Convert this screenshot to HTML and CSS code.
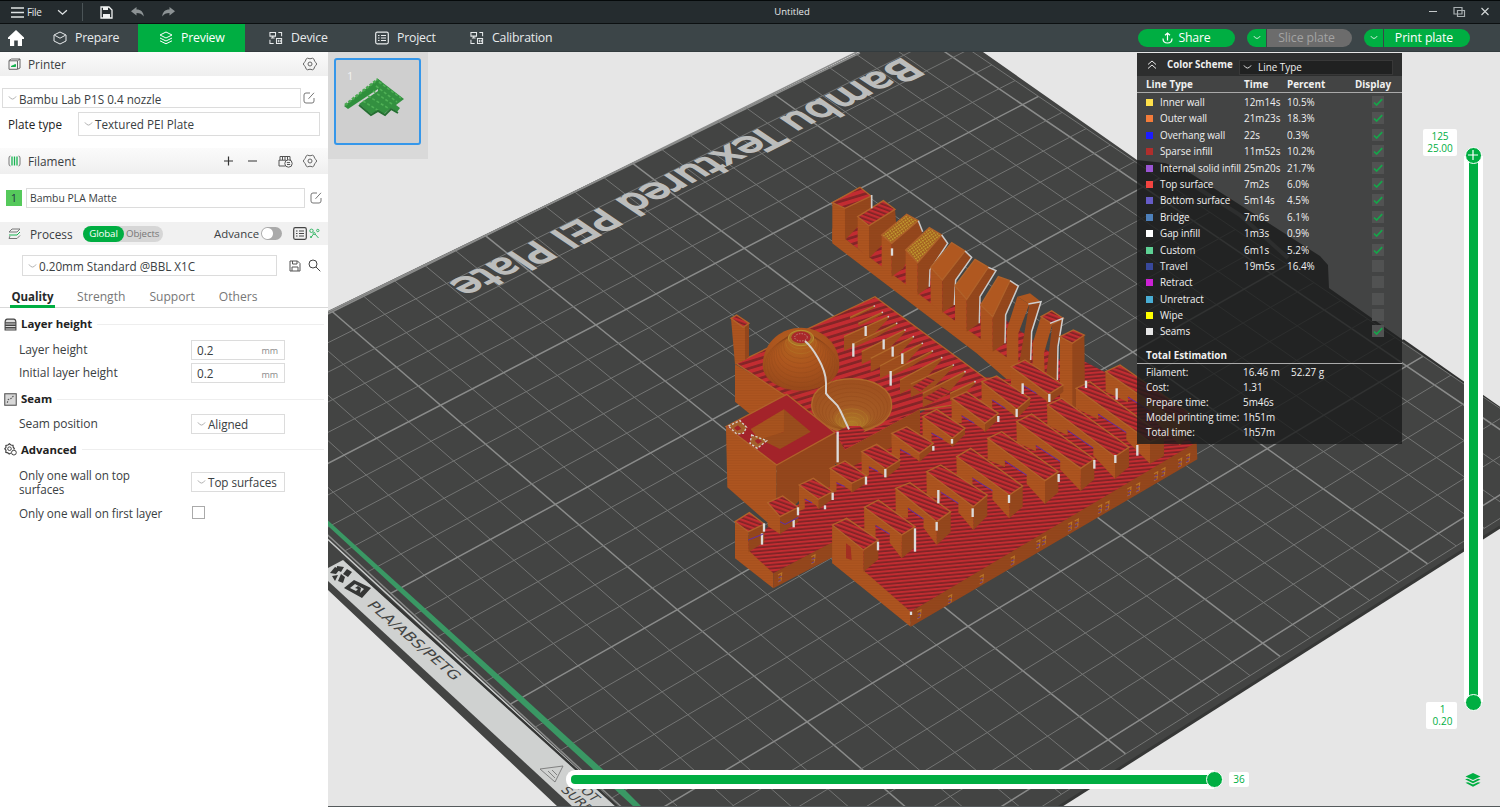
FILE: index.html
```html
<!DOCTYPE html>
<html lang="en">
<head>
<meta charset="utf-8">
<title>Untitled</title>
<link rel="stylesheet" href="styles.css">
</head>
<body>
<svg class="defs" width="0" height="0">
  <symbol id="i-chev" viewBox="0 0 10 6"><path d="M1 1.2 Q3 4.2 5 4.2 Q7 4.2 9 1.2" fill="none" stroke="currentColor"/></symbol>
  <symbol id="i-gear" viewBox="0 0 14 14"><path d="M4.500 1.200 Q7 2.400 9.500 1.200 L11 2.200 Q11.200 4.800 13.400 6 V8 Q11.200 9.200 11 11.800 L9.500 12.800 Q7 11.600 4.500 12.800 L3 11.800 Q2.800 9.200 .6 8 V6 Q2.800 4.800 3 2.200 Z" fill="none" stroke="currentColor" stroke-linejoin="round"/><circle cx="7" cy="7" r="2" fill="none" stroke="currentColor"/></symbol>
  <symbol id="i-edit" viewBox="0 0 12 12"><path d="M7 1 H3 Q1 1 1 3 V9 Q1 11 3 11 H9 Q11 11 11 9 V6 M5.5 6.8 L11 .8" fill="none" stroke="currentColor"/></symbol>
  <symbol id="i-device" viewBox="0 0 15 14"><path d="M1 1 H7 V5 H1 Z M4 5 V7 M2 7 H6 M10 1 H13.5 V5 M1 9 V13 H5 M8 7.500 H13.500 V13 H8 Z M10 9 V11.500 M12 9 V11.500" fill="none" stroke="currentColor" stroke-width="1.1"/></symbol>
  <symbol id="i-list" viewBox="0 0 14 13"><rect x=".7" y=".7" width="12.600" height="11.600" rx="1.500" fill="none" stroke="currentColor" stroke-width="1.200"/><path d="M3 4 H4.500 M6 4 H11 M3 6.500 H4.500 M6 6.500 H11 M3 9 H4.500 M6 9 H11" stroke="currentColor"/></symbol>
  <symbol id="i-save" viewBox="0 0 12 12"><path d="M1 1 H8.500 L11 3.500 V11 H1 Z M3.500 1 V4 H8 V1 M3 11 V7 H9 V11" fill="none" stroke="currentColor"/></symbol>
  <symbol id="i-check" viewBox="0 0 12 12"><path d="M2 6.500 L4.600 9 L10.200 3.200" fill="none" stroke="#15a64a" stroke-width="1.700"/></symbol>
</svg>

<header class="titlebar">
  <svg class="burger" viewBox="0 0 13 11"><path d="M0 1H13M0 5.500H13M0 10H13" stroke="#dfe3e4" stroke-width="1.300"/></svg>
  <span class="file">File</span>
  <svg class="file-chev" viewBox="0 0 10 6"><path d="M1 1 L5 4.500 L9 1" fill="none" stroke="#e0e4e5" stroke-width="1.200"/></svg>
  <i class="sep"></i>
  <svg class="tb-save" viewBox="0 0 13 13"><path d="M1 1 H9 L12 4 V12 H1 Z" fill="none" stroke="#f1f3f3" stroke-width="1.300"/><path d="M3 1H8V4H3Z M3 8H10V12H3Z" fill="#f1f3f3"/></svg>
  <svg class="tb-undo" viewBox="0 0 13 10"><path d="M0 4.200 L5.500 0 V2.400 C10 2.400 12.500 5 12.800 9.500 C11 7 9 6 5.500 6 V8.500 Z" fill="#8c9294"/></svg>
  <svg class="tb-redo" viewBox="0 0 13 10"><path d="M13 4.200 L7.500 0 V2.400 C3 2.400 .5 5 .2 9.500 C2 7 4 6 7.500 6 V8.500 Z" fill="#8c9294"/></svg>
  <span class="title">Untitled</span>
  <svg class="winbtns" viewBox="0 0 62 12"><path d="M0 5.500H8" stroke="#c4c9ca"/><path d="M25 1.500 H33 V8 H25 Z M28.500 4.500 H35.500 V10.500 H28.500 Z" fill="none" stroke="#aab0b2" stroke-width="1.200"/><path d="M52.500 2 L59.500 9 M59.500 2 L52.500 9" stroke="#d5d9da" stroke-width="1.100"/></svg>
</header>

<nav class="tabs">
  <svg class="home" viewBox="0 0 16 16"><path d="M8 0 L16 7.500 V9 H14 V16 H9.800 V10.500 H6.200 V16 H2 V9 H0 V7.500 Z" fill="#fff"/></svg>
  <a class="tab prepare"><svg viewBox="0 0 14 14"><path d="M7 1 L13 4 V10 L7 13 L1 10 V4 Z M1.500 4.200 L7 7.200 L12.500 4.200" fill="none" stroke="currentColor"/></svg><span>Prepare</span></a>
  <a class="tab preview"><svg viewBox="0 0 14 14"><path d="M7 1 L13 4 L7 7 L1 4 Z M1 7 L7 10 L13 7 M1 9.800 L7 12.800 L13 9.800" fill="none" stroke="currentColor"/></svg><span>Preview</span></a>
  <a class="tab device"><svg><use href="#i-device"/></svg><span>Device</span></a>
  <a class="tab project"><svg><use href="#i-list"/></svg><span>Project</span></a>
  <a class="tab calib"><svg><use href="#i-device"/></svg><span>Calibration</span></a>
  <div class="actions">
    <button class="pill share"><svg viewBox="0 0 11 12"><path d="M5.500 8.500 V1 M3 3.200 L5.500 1 L8 3.200 M1 6.500 Q1 11 5.500 11 Q10 11 10 6.500" fill="none" stroke="#fff" stroke-width="1.200"/></svg>Share</button>
    <div class="split slice"><b><svg><use href="#i-chev"/></svg></b><span>Slice plate</span></div>
    <div class="split print"><b><svg><use href="#i-chev"/></svg></b><span>Print plate</span></div>
  </div>
</nav>

<main class="work">
  <aside class="side">
    <div class="head h-printer">
      <svg class="hi" viewBox="0 0 13 12"><path d="M1 2.500 L3.500 1 H12 V10 L9.500 11.300 H1 Z M9.500 2.800 V11 M1 2.800 H9.500 L12 1" fill="none" stroke="#666"/><path d="M3 8.500 H7.500 V6.500 Z" fill="#13b04d" stroke="#13b04d"/></svg>
      <span>Printer</span><svg class="gear"><use href="#i-gear"/></svg>
    </div>
    <div class="row r-printer"><div class="combo"><svg class="cv"><use href="#i-chev"/></svg><span>Bambu Lab P1S 0.4 nozzle</span></div><svg class="edit"><use href="#i-edit"/></svg></div>
    <div class="row r-plate"><label>Plate type</label><div class="combo"><svg class="cv"><use href="#i-chev"/></svg><span>Textured PEI Plate</span></div></div>
    <div class="head h-fil">
      <svg class="hi" viewBox="0 0 13 12"><path d="M2.500 1 Q1 1 1 3 V9 Q1 11 2.500 11 M10.500 1 Q12 1 12 3 V9 Q12 11 10.500 11" fill="none" stroke="#777"/><path d="M4 1.500 V10.500 M6.500 1.500 V10.500 M9 1.500 V10.500" stroke="#18b352" stroke-width="1.300"/></svg>
      <span class="fil-name">Filament</span>
      <svg class="pm" viewBox="0 0 36 12"><path d="M1 6H10M5.500 1.500V10.500M25 6H34" stroke="#333" stroke-width="1.200"/></svg>
      <svg class="ams" viewBox="0 0 15 13"><path d="M2 5 V1.500 H12 V5 M4.500 1.500V5 M7 1.500V5 M9.500 1.500V5 M1 5.200 H8 M1 5 V11 H7 M12 5 H13" fill="none" stroke="#555"/><circle cx="10.500" cy="8.500" r="3.700" fill="#f7f7f7" stroke="#555"/><path d="M8.800 7.600H12 M12.200 9.500H9" stroke="#555"/></svg>
      <svg class="gear"><use href="#i-gear"/></svg>
    </div>
    <div class="row r-fil"><em>1</em><div class="combo"><span>Bambu PLA Matte</span></div><svg class="edit"><use href="#i-edit"/></svg></div>
    <div class="head h-proc">
      <svg class="hi" viewBox="0 0 13 12"><path d="M4 1 H12 L9 4 H1 Z" fill="none" stroke="#777"/><path d="M12 4 L9 7 H1" fill="none" stroke="#18b352"/><path d="M2 8 L1 10.500 H9 L12 7.500" fill="none" stroke="#777"/></svg>
      <span class="proc-name">Process</span>
      <div class="seg"><b>Global</b><i>Objects</i></div>
      <label>Advance</label><i class="toggle"></i>
      <svg class="plist"><use href="#i-list"/></svg>
      <svg class="cmp" viewBox="0 0 11 11"><path d="M4.500 6 L2 9.500 M6 6 L9.500 10" stroke="#36b767"/><circle cx="2.500" cy="2.800" r="1.700" fill="none" stroke="#36b767"/><circle cx="8.800" cy="2.500" r="1.200" fill="none" stroke="#36b767"/><circle cx="5.200" cy="5.500" r="1" fill="none" stroke="#36b767"/><circle cx="2" cy="9" r="1" fill="#36b767"/></svg>
    </div>
    <div class="row r-preset"><div class="combo"><svg class="cv"><use href="#i-chev"/></svg><span>0.20mm Standard @BBL X1C</span></div><svg class="psave"><use href="#i-save"/></svg><svg class="psearch" viewBox="0 0 13 13"><circle cx="5" cy="5" r="4" fill="none" stroke="#444"/><path d="M8 8 L12.300 12.300" stroke="#444"/></svg></div>
    <div class="ptabs"><a class="on">Quality</a><a>Strength</a><a>Support</a><a>Others</a></div>
    <div class="sec s1"><svg viewBox="0 0 12 12"><path d="M1 4 Q1 1 3 1 H9 Q11 1 11 4 V11 H1 Z" fill="#ddd" stroke="#444"/><path d="M1 4.500H11M1 6.700H11M1 9H11" stroke="#444" stroke-width="1.300"/></svg><b>Layer height</b><i></i></div>
    <div class="opt"><label>Layer height</label><div class="num"><span>0.2</span><small>mm</small></div></div>
    <div class="opt"><label>Initial layer height</label><div class="num"><span>0.2</span><small>mm</small></div></div>
    <div class="sec s2"><svg viewBox="0 0 12 12"><rect x=".7" y=".7" width="10.600" height="10.600" fill="#d8d8d8" stroke="#555"/><path d="M3 9 L4 6 L6.500 5 L9 2.500" fill="none" stroke="#555" stroke-dasharray="1.500 1"/></svg><b>Seam</b><i></i></div>
    <div class="opt o-seam"><label>Seam position</label><div class="num"><svg class="cv"><use href="#i-chev"/></svg><span>Aligned</span></div></div>
    <div class="sec s3"><svg viewBox="0 0 13 13"><path d="M6.800 10 L5.200 11 L3.800 9.800 L1.800 9.300 L2 7.300 L.8 5.800 L2 4.300 L1.900 2.500 L3.900 2 L5.400 .8 L7 2 L9 2.300 L9.200 4.200 L10.300 5.600 L9.800 6.500" fill="none" stroke="#444" stroke-width="1.200"/><circle cx="5.500" cy="5.700" r="1.800" fill="none" stroke="#444"/><circle cx="9.900" cy="9.600" r="2.400" fill="#fff" stroke="#444"/></svg><b>Advanced</b><i></i></div>
    <div class="opt o-top"><label>Only one wall on top<br>surfaces</label><div class="num"><svg class="cv"><use href="#i-chev"/></svg><span>Top surfaces</span></div></div>
    <div class="opt o-first"><label>Only one wall on first layer</label><i class="box"></i></div>
  </aside>

  <section class="view">
    <svg id="scene" viewBox="328 52 1172 755"></svg>
    <div class="thumbs"><div class="thumb"><span>1</span>
      <svg viewBox="0 0 87 87"><path d="M10 48 L44 21 L48 24 L47 29 L14 51 Z" fill="#2f8f3c"/><path d="M44 21 L70 41 L62 47 L66 50 L63 54 L57 50 L50 56 L44 53 L37 56 L25 46 L44 33 Z" fill="#339040"/><path d="M11 47 L44 21" stroke="#4aa951" stroke-width="2.500" stroke-dasharray="3 1.500"/><path d="M45 24 L67 40 M42 28 L63 44 M39 33 L58 46 M34 38 L54 50 M29 43 L45 53" stroke="#4fb055" stroke-width="1.600" stroke-dasharray="3 2"/><path d="M25 47 L37 57 L44 53 L51 57 L57 51 L64 55" fill="none" stroke="#256f32" stroke-width="2"/></svg>
    </div></div>

    <div class="legend">
      <div class="lg-title"><svg viewBox="0 0 10 9"><path d="M1 4.500 L5 1 L9 4.500 M1 8.500 L5 5 L9 8.500" fill="none" stroke="#e8e8e8"/></svg><b>Color Scheme</b><div class="lg-combo"><svg><use href="#i-chev"/></svg><span>Line Type</span></div></div>
      <div class="lg-row lg-head"><span>Line Type</span><span>Time</span><span>Percent</span><span>Display</span></div>
      <div id="rows"></div>
      <div class="lg-total">Total Estimation</div>
      <div class="lg-sum"><span>Filament:</span><span>16.46 m</span><span>52.27 g</span></div>
      <div class="lg-sum"><span>Cost:</span><span>1.31</span></div>
      <div class="lg-sum"><span>Prepare time:</span><span>5m46s</span></div>
      <div class="lg-sum"><span>Model printing time:</span><span>1h51m</span></div>
      <div class="lg-sum"><span>Total time:</span><span>1h57m</span></div>
    </div>

    <div class="vslider"><i class="knob top"><svg viewBox="0 0 14 14"><path d="M7 2V12M2 7H12" stroke="#fff" stroke-width="1.200"/></svg></i><i class="knob bottom"></i></div>
    <div class="tip t-top">125<br>25.00</div>
    <div class="tip t-bot">1<br>0.20</div>
    <div class="hslider"><i class="knob"></i></div>
    <div class="tip t-h">36</div>
    <svg class="layers" viewBox="0 0 16 14"><path d="M8 0 L15.500 3.500 L8 7 L.5 3.500 Z M.5 6 L3 5.800 L8 8.200 L13 5.800 L15.500 6.500 L8 10.300 L.5 6.500 Z M.5 9.800 L3 9.200 L8 11.600 L13 9.200 L15.500 9.800 L8 13.700 Z" fill="#00ae42"/></svg>
  </section>
</main>
<script src="scene.js"></script>
</body>
</html>
```

FILE: styles.css
```css
* { box-sizing: border-box; }
body { margin: 0; width: 1500px; height: 807px; overflow: hidden; display: flex; flex-direction: column; background: #e6e6e6; font: 12px/16px "Open Sans", "Noto Sans", sans-serif; color: #3a4042; }
svg { display: block; flex: none; }
.defs { position: absolute; }
i, em { font-style: normal; flex: none; }
span, label, b, a { white-space: nowrap; }

.titlebar { position: relative; flex: none; height: 24px; display: flex; align-items: center; background: #252c2f; border-top: 1px solid #05090a; border-bottom: 1px solid #0c1011; color: #e6e9ea; padding-left: 11px; }
.burger { width: 13px; height: 11px; }
.file { width: 31px; padding-left: 3px; font-size: 10px; letter-spacing: -.3px; }
.file-chev { width: 11px; height: 7px; margin-left: 2px; }
.sep { width: 1px; height: 18px; margin-left: 14px; background: #4b5457; }
.tb-save { width: 13px; height: 13px; margin-left: 17px; }
.tb-undo { width: 13px; height: 10px; margin-left: 18px; }
.tb-redo { width: 13px; height: 10px; margin-left: 18px; }
.title { position: absolute; left: 0; right: 16px; text-align: center; padding-left: 100px; font-size: 9.500px; }
.winbtns { width: 62px; height: 12px; margin-left: auto; margin-right: 9px; }

.tabs { flex: none; height: 28px; display: flex; align-items: center; background: #3c4548; color: #e8ebec; border-bottom: 1px solid #333b3e; }
.home { width: 16px; height: 16px; margin-left: 8px; }
.tab { display: flex; align-items: center; height: 28px; gap: 8px; font-size: 12.300px; letter-spacing: -.2px; }
.tab svg { width: 14px; height: 14px; }
.prepare { width: 114px; padding-left: 29px; }
.preview { width: 107px; padding-left: 21px; background: #00ae42; color: #fff; }
.device { width: 130px; padding-left: 24px; }
.project { width: 95px; }
.actions { margin-left: auto; margin-right: 30px; display: flex; align-items: center; gap: 12px; }
.pill { width: 97px; height: 18px; border: 0; border-radius: 9px; background: #00ae42; color: #fff; font: 12.300px/18px "Open Sans", sans-serif; letter-spacing: -.2px; display: flex; align-items: center; justify-content: center; gap: 5px; padding: 0; }
.pill svg { width: 11px; height: 12px; }
.split { display: flex; gap: 1px; color: #fff; font-size: 12.300px; letter-spacing: -.1px; line-height: 18px; text-align: center; }
.split b { width: 19px; height: 18px; border-radius: 9px 0 0 9px; background: #00ae42; display: flex; align-items: center; justify-content: center; }
.split b svg { width: 8px; height: 5px; }
.split span { width: 86px; height: 18px; border-radius: 0 9px 9px 0; background: #00ae42; padding-right: 6px; }
.slice span { width: 85px; background: #6c6c6c; color: #a3a3a3; }

.work { flex: 1; display: flex; min-height: 0; }
.side { width: 328px; flex: none; background: #fff; }
.head { display: flex; align-items: center; padding-left: 8px; padding-right: 11px; font-size: 11.800px; background: linear-gradient(#fbfbfb, #efefef); }
.head .hi { width: 13px; height: 12px; margin-right: 7px; }
.gear { width: 14px; height: 14px; color: #666; margin-left: auto; }
.h-printer { height: 24px; }
.h-fil { height: 26px; margin-top: 12px; }
.h-proc { height: 23px; margin-top: 14px; margin-bottom: 10px; background: #f1f1f1; }
.h-proc .hi { margin-right: 9px; }
.fil-name { width: 48px; }
.proc-name { width: 42px; }
.pm { width: 36px; height: 12px; margin-left: 147px; }
.ams { width: 15px; height: 13px; margin-left: 19px; }
.row { display: flex; align-items: center; }
.combo { display: flex; align-items: center; height: 100%; border: 1px solid #dcdcdc; background: #fff; padding-left: 5px; font-size: 11.700px; }
.cv { width: 9px; height: 6px; color: #a9a9a9; margin-right: 2px; }
.edit { width: 12px; height: 12px; color: #777; }
.r-printer { height: 20px; margin: 12px 0 0 2px; gap: 2px; }
.r-printer .combo { width: 299px; }
.r-printer span { padding-top: 1px; }
.r-plate { height: 24px; margin: 4px 0 0 8px; color: #222; font-size: 11.700px; }
.r-plate label { width: 70px; }
.r-plate .combo { width: 242px; color: #3a4042; }
.r-fil { height: 20px; margin: 14px 0 0 6px; }
.r-fil em { width: 16px; height: 16px; margin-right: 4px; background: #55c95b; text-align: center; color: #234; font-size: 11px; }
.r-fil .combo { width: 279px; padding-left: 3px; margin-right: 5px; font-size: 10.400px; }
.seg { flex: none; display: flex; width: 80px; height: 16px; margin-left: 11px; border-radius: 8px; background: #d6d6d6; font-size: 9.700px; letter-spacing: -.1px; line-height: 16px; }
.seg b { width: 41px; border-radius: 8px; background: #00ae42; color: #fff; font-weight: 400; text-align: center; }
.seg i { padding-left: 2px; color: #777; }
.h-proc label { width: 46px; margin-left: 51px; font-size: 11.400px; }
.toggle { width: 21px; height: 13px; margin-left: 2px; border-radius: 7px; background: radial-gradient(circle at 6.500px 6.500px, #fff 5px, #aaa 6px); }
.plist { width: 14px; height: 13px; margin-left: 11px; color: #444; }
.cmp { width: 11px; height: 11px; margin-left: 2px; }
.r-preset { height: 21px; margin: 0 0 0 22px; }
.r-preset .combo { width: 255px; }
.psave { width: 12px; height: 12px; margin-left: 12px; color: #555; }
.psearch { width: 13px; height: 13px; margin-left: 7px; }
.ptabs { height: 32px; display: flex; padding: 13px 0 0 10px; border-bottom: 1px solid #d9d9d9; color: #777; font-size: 12.100px; }
.ptabs a { margin-right: 24px; height: 19px; }
.ptabs .on { width: 45px; margin-right: 22px; text-align: center; font-size: 11.500px; font-weight: 700; color: #26292a; border-bottom: 3px solid #00ae42; }
.sec { display: flex; align-items: center; height: 16px; padding-left: 4px; color: #222; font-size: 11.400px; }
.sec svg { width: 13px; height: 13px; margin-right: 4px; }
.sec i { flex: 1; height: 1px; margin: 0 4px 0 5px; background: #eee; }
.s1 { margin: 8px 0 6px; }
.s2 { margin: 6px 0 6px; }
.s3 { margin: 6px 0 5px; }
.opt { display: flex; align-items: center; height: 23.500px; padding-left: 19px; font-size: 12px; letter-spacing: -.05px; }
.opt label { width: 172px; line-height: 14px; }
.num { width: 94px; height: 20px; border: 1px solid #dcdcdc; display: flex; align-items: center; padding-left: 5px; font-size: 11.700px; }
.num small { margin-left: auto; padding: 3px 6px 0 0; font-size: 9px; color: #8a8a8a; }
.o-seam { margin-top: -1px; }
.o-top { height: 38px; }
.o-first { height: 24px; }
.o-first label, .o-top label { font-size: 11.700px; }
.box { width: 13px; height: 13px; margin-left: 1px; border: 1px solid #aaa; }

.view { position: relative; flex: 1; overflow: hidden; background: #e6e6e6; border-bottom: 1px solid #555a5c; }
#scene { width: 1172px; height: 755px; }
.thumbs { position: absolute; left: 0; top: 0; width: 100px; height: 107px; background: #d9d9d9; padding: 6px; }
.thumb { position: relative; width: 87px; height: 87px; border: 2px solid #3597ea; border-radius: 3px; background: #cfcfcf; }
.thumb span { position: absolute; left: 11px; top: 8px; font-size: 11px; color: #f2f2f2; }
.thumb svg { width: 87px; height: 87px; margin: -2px; }

.legend { position: absolute; left: 809px; top: 1px; width: 265px; height: 391px; background: rgba(26, 27, 27, .8); color: #f0f0f0; font-size: 9.900px; }
.lg-title { height: 23px; display: flex; align-items: center; padding-left: 10px; background: rgba(20, 20, 20, .45); }
.lg-title svg { width: 10px; height: 9px; }
.lg-title b { margin-left: 10px; width: 72px; font-size: 9.700px; }
.lg-combo { display: flex; align-items: center; width: 154px; height: 15px; margin-top: 5px; background: #202121; border: 1px solid #383838; padding-left: 3px; }
.lg-combo svg { width: 9px; height: 6px; margin-right: 6px; }
.lg-row { display: grid; grid-template-columns: 98px 43px 68px 1fr; height: 16.400px; line-height: 16.400px; padding-left: 9px; }
.lg-row .chk { width: 12px; height: 12px; margin: 2px 0 0 17px; background: #515252; }
.lg-row .name::before { content: ""; display: inline-block; width: 7px; height: 7px; margin-right: 7px; background: var(--c); }
.lg-row .name { letter-spacing: -.05px; }
.lg-head { height: 17px; margin-bottom: 1px; font-weight: 700; border-bottom: 1px solid #aaa; }
.lg-total { height: 21px; padding: 5px 0 0 9px; margin-top: 3px; line-height: 14px; font-weight: 700; border-bottom: 1px solid #aaa; }
.lg-sum { display: grid; grid-template-columns: 97px 48px 1fr; height: 15px; line-height: 17px; padding-left: 9px; }

.vslider { position: absolute; left: 1136px; top: 104px; width: 19px; height: 546px; border: solid #fff; border-width: 0 5px 0 5px; background: #00ae42; }
.knob { position: absolute; width: 17px; height: 17px; border: 1.500px solid #fff; border-radius: 50%; background: #00ae42; }
.knob svg { width: 14px; height: 14px; }
.vslider .knob { left: -4px; }
.vslider .top { top: -9px; }
.vslider .bottom { bottom: -9px; }
.hslider { position: absolute; left: 238px; top: 718px; width: 648px; height: 19px; border: 5px solid #fff; border-radius: 9px 0 0 9px; border-right: 0; background: #00ae42; }
.hslider .knob { right: -9px; top: -4px; }
.tip { position: absolute; background: #fff; color: #00ae42; font-size: 10px; line-height: 12px; text-align: center; border-radius: 2px; }
.t-top { left: 1095px; top: 77px; width: 34px; height: 27px; padding: 1px 0 0 0; }
.t-bot { left: 1098px; top: 650px; width: 31px; height: 27px; padding: 1px 0 0 2px; }
.t-h { left: 901px; top: 720px; width: 20px; height: 15px; line-height: 15px; }
.layers { position: absolute; left: 1137px; top: 721px; width: 16px; height: 14px; }
```

FILE: scene.js
```js
// Legend rows
const LINES = [
  ['Inner wall', '12m14s', '10.5%', '#ffe14b', 1], ['Outer wall', '21m23s', '18.3%', '#f47c3a', 1],
  ['Overhang wall', '22s', '0.3%', '#1c1cff', 1], ['Sparse infill', '11m52s', '10.2%', '#b12e2c', 1],
  ['Internal solid infill', '25m20s', '21.7%', '#9a54d3', 1], ['Top surface', '7m2s', '6.0%', '#f24440', 1],
  ['Bottom surface', '5m14s', '4.5%', '#665cc7', 1], ['Bridge', '7m6s', '6.1%', '#4d80ba', 1],
  ['Gap infill', '1m3s', '0.9%', '#ffffff', 1], ['Custom', '6m1s', '5.2%', '#5ed194', 1],
  ['Travel', '19m5s', '16.4%', '#38489b', 0], ['Retract', '', '', '#cd22d6', 0],
  ['Unretract', '', '', '#49add4', 0], ['Wipe', '', '', '#ffff00', 0], ['Seams', '', '', '#e6e6e6', 1]
];
document.getElementById('rows').innerHTML = LINES.map(([n, t, p, c, on]) =>
  `<div class="lg-row"><span class="name" style="--c:${c}">${n}</span><span>${t}</span><span>${p}</span><svg class="chk">${on ? '<use href="#i-check"/>' : ''}</svg></div>`).join('');

// Bed plane -> screen: least-squares projective fit over grid marks [u, v, x, y]
const MARKS = [[5,0,745,248],[10,0,885,174.5],[10,5,1005.7,261],[10,10,1135,354],[-5,5,555.7,504],[0,5,713.5,420],
  [-5,10,675.2,610],[0,15,968.3,627],[5,15,1121.7,535],[10,15,1266,447.5],[5,20,1262.7,642.7],[-10,5,391,593]];
function fit(marks) {
  const M = Array.from({ length: 8 }, () => new Array(9).fill(0));
  const add = (r, t) => { for (let i = 0; i < 8; i++) { for (let j = 0; j < 8; j++) M[i][j] += r[i] * r[j]; M[i][8] += r[i] * t; } };
  for (const [u, v, X, Y] of marks) {
    const x = X / 100, y = Y / 100;
    add([u, v, 1, 0, 0, 0, -u * x, -v * x], x);
    add([0, 0, 0, u, v, 1, -u * y, -v * y], y);
  }
  for (let i = 0; i < 8; i++) {
    let p = i;
    for (let r = i + 1; r < 8; r++) if (Math.abs(M[r][i]) > Math.abs(M[p][i])) p = r;
    [M[i], M[p]] = [M[p], M[i]];
    for (let r = 0; r < 8; r++) if (r !== i) {
      const f = M[r][i] / M[i][i];
      for (let c = i; c < 9; c++) M[r][c] -= f * M[i][c];
    }
  }
  return M.map((r, i) => r[8] / r[i]);
}
const H = fit(MARKS);
const proj = (u, v) => {
  const w = H[6] * u + H[7] * v + 1;
  return [100 * (H[0] * u + H[1] * v + H[2]) / w, 100 * (H[3] * u + H[4] * v + H[5]) / w];
};
const out = [];
const put = s => out.push(s);
const P = pts => pts.map(p => p.map(n => n.toFixed(1)).join(',')).join(' ');
const poly = (pts, fill, extra = '') => put(`<polygon points="${P(pts)}" fill="${fill}" ${extra}/>`);
const line = (pts, stroke, w) => put(`<polyline points="${P(pts)}" fill="none" stroke="${stroke}" stroke-width="${w}"/>`);

put(`<defs>
<pattern id="red" width="20" height="11" patternUnits="userSpaceOnUse" patternTransform="rotate(-5)"><rect width="20" height="11" fill="#c22c31"/><rect y="6" width="20" height="5" fill="#7c2426"/></pattern>
<pattern id="redBack" width="20" height="19" patternUnits="userSpaceOnUse" patternTransform="rotate(-17)"><rect width="20" height="19" fill="#c22c31"/><rect y="11" width="20" height="8" fill="#842527"/></pattern>
<pattern id="redTop" width="20" height="12" patternUnits="userSpaceOnUse" patternTransform="rotate(20)"><rect width="20" height="12" fill="#c22c31"/><rect y="7" width="20" height="5" fill="#7c2426"/></pattern>
<pattern id="yel" width="8" height="8" patternUnits="userSpaceOnUse" patternTransform="rotate(-35)"><rect width="8" height="8" fill="#a35f20"/><rect width="5" height="5" fill="#c09b2e"/></pattern>
<pattern id="lay" width="8" height="5" patternUnits="userSpaceOnUse"><rect width="8" height="1.6" fill="#7c3a10" opacity=".28"/></pattern>
<radialGradient id="dome" cx=".45" cy=".3" r=".75"><stop offset="0" stop-color="#b0641f"/><stop offset=".4" stop-color="#ad561e"/><stop offset="1" stop-color="#94471a"/></radialGradient>
<radialGradient id="bowl" cx=".5" cy=".85" r=".8"><stop offset="0" stop-color="#b07c28"/><stop offset=".4" stop-color="#a45a24"/><stop offset="1" stop-color="#9e501f"/></radialGradient>
</defs>`);

// Bed
poly([[328,311],[860,52],[983,52],[1137,160],[1165,163],[1190,173],[1320,256],[1328,265],[1329,288],[1403,340],[1500,408],[1500,527],[1059,807],[558,807],[328,590]], '#434443');
line([[1196,187],[1240,215],[1288,258]], '#777', 4);
line([[328,312],[860,53]], '#8b8c8b', 1.6);
line([[1403,340],[1500,408]], '#313231', 2);
line([[1059,807],[1500,527]], '#363736', 3);
const THIN = ['#767776', .95], THICK = ['#8a8b8a', 1.5];
for (let u = -10; u <= 15; u++) line([proj(u, -5), proj(u, 20.6)], ...(u % 5 === 0 ? THICK : THIN));
for (let v = -5; v <= 20; v++) line([proj(-10, v), proj(15.6, v)], ...(v % 5 === 0 ? THICK : THIN));
line([proj(15.6, -5), proj(15.6, 20.6), proj(-10, 20.6)], ...THIN);
poly([[328,520.5],[620,785],[642,807],[634,807],[328,526]], '#3a9864');
line([[328,539.5],[575,767],[618,807]], '#c9cbca', 1.5);
poly([[328,568],[343,560],[616,807],[573,807],[328,581]], '#cfd1d0');
line([[345,560],[618,807]], '#353635', 2);
put(`<text transform="matrix(-.895 .445 -.9 -.61 904 57)" font-family="DejaVu Sans" font-size="35" fill="#bcbdbc" stroke="#bcbdbc" stroke-width="1.8" textLength="510" lengthAdjust="spacingAndGlyphs">Bambu Textured PEI Plate</text>`);
put(`<text transform="matrix(.757 .653 -.88 .47 366 605)" font-family="DejaVu Sans" font-size="14.500" fill="#434443" textLength="116" lengthAdjust="spacingAndGlyphs">PLA/ABS/PETG</text>`);
put(`<text transform="matrix(.757 .653 -.88 .47 572 784)" font-family="DejaVu Sans" font-size="13" fill="#434443">HOT</text>`);
put(`<text transform="matrix(.757 .653 -.88 .47 560 790)" font-family="DejaVu Sans" font-size="13" fill="#434443">SURFACE</text>`);
put('<path d="M540 769 L563 766 L555 782 Z M548 771 L555 778 M552 770 L557 775" fill="none" stroke="#777" stroke-width=".9"/>');
put('<g fill="#353635"><path d="M330 573 L335 567 L340 569 L336 574 Z M337 566 L344 567 L341 572 L337 570 Z M332 576 L338 575 L335 581 Z M338 581 L341 574 L345 577 L343 583 Z M343 574 L347 569 L352 572 L348 577 Z"/><path d="M354 580 L371 588 L362 598 L344 588 Z M355 584 L350 588 L356 591 L358 589 L355 588 L358 586 L361 588 L360 593 L364 589 Z" fill-rule="evenodd"/></g>');

// Model, drawn at triple scale inside local frames
const LF = '#af5520', RF = '#95471d', EDGE = '#b0622a';
const frame = (x, y, fn) => { put(`<g transform="translate(${x} ${y}) scale(.33333)">`); fn(); put('</g>'); };
const face = (pts, c) => { poly(pts, c); poly(pts, 'url(#lay)'); };
const tick = (x, y, h) => line([[x, y], [x, y + h]], '#dcdcdc', 7);
const down = (p, h) => [p[0], p[1] + h];
const mix = (p, q, t) => [p[0] + (q[0] - p[0]) * t, p[1] + (q[1] - p[1]) * t];
// l, t, r, b: corners of the top face; leg and far: heights of the near and far legs
function bridge(l, t, r, b, leg, far = leg, open = true) {
  face([b, r, down(r, leg - 8), down(b, leg)], RF);
  if (open) {
    const m = mix(l, b, .3), n = mix(l, b, .68);
    face([l, m, down(m, far * .75), down(l, far)], LF);
    face([n, b, down(b, leg), down(n, leg - 20)], LF);
    face([l, b, down(b, 22), down(l, 30)], LF);
    line([down(m, 30), down(n, 24)], '#5f2fa8', 3);
  } else face([l, b, down(b, leg), down(l, far)], LF);
  poly([l, t, r, b], 'url(#redTop)', `stroke="${EDGE}" stroke-width="4"`);
}

frame(720, 180, () => {
  // rear rail
  poly([[340,150],[430,110],[1090,590],[1010,640],[870,555]], 'url(#redBack)');
  face([[337,145],[395,192],[690,412],[900,560],[880,615],[770,520],[337,190]], LF);
  const fins = [
    [[[337,68],[420,22],[453,48],[375,85]], [453,100], [375,180], 185, 'redBack'],
    [[[413,110],[490,62],[525,88],[447,137]], [530,150], [447,235], 205, 'redTop'],
    [[[485,165],[560,103],[595,122],[515,190]], [550,265], [515,290], 260, 'yel', [608,155]],
    [[[557,210],[628,143],[665,165],[593,248]], [628,320], [593,345], 315, 'yel', [683,190],[630,270]],
    [[[632,262],[695,188],[735,213],[667,300]], [703,375], [667,398], 370, 'or', [755,232],[707,300]],
    [[[705,318],[765,238],[805,262],[740,358]], [778,430], [740,455], 425, 'or', [828,272],[780,350]],
    [[[782,375],[835,290],[870,302],[818,410]], [855,490], [818,515], 480, 'or', [895,318],[857,405]]
  ];
  for (const [t, rb, fb, lb, kind, s1, s2] of fins) {
    face([t[0], t[3], fb, [t[0][0], lb]], LF);
    face([t[3], t[2], ...(s1 ? [s1] : []), ...(s2 ? [s2] : []), rb, fb], RF);
    poly(t, kind === 'or' ? '#b05820' : `url(#${kind})`, `stroke="${EDGE}" stroke-width="4"`);
    if (s1) line([t[2], s1, ...(s2 ? [s2, rb] : [])], '#c9c9c9', 4.5);
  }
  face([[892,350],[928,372],[895,460],[895,560],[860,545],[860,450]], LF);
  face([[928,372],[963,365],[935,455],[932,545],[895,565]], RF);
  poly([[892,350],[930,340],[963,365],[928,372]], '#ad5720');
  line([[925,372],[963,365],[935,455],[932,540]], '#cfcfcf', 4.5);
  face([[963,410],[997,432],[972,520],[975,610],[938,590],[938,490]], LF);
  face([[997,432],[1030,415],[1012,500],[1012,620],[975,615]], RF);
  poly([[963,410],[995,392],[1030,415],[997,432]], 'url(#redTop)', `stroke="${EDGE}" stroke-width="4"`);
  line([[990,430],[1028,415],[1014,500],[1012,600]], '#cfcfcf', 4.5);
  line([[455,45],[455,85]], '#ccc', 5);
  tick(516, 205, 22);

  // base floor
  poly([[45,1115],[600,700],[780,590],[1000,610],[1095,545],[1200,600],[1430,800],[572,1295],[430,1180],[345,1085],[160,1180]], 'url(#red)');
  face([[1020,470],[1060,490],[1060,700],[1020,660]], LF);
  face([[1057,490],[1093,465],[1095,660],[1057,700]], RF);
  poly([[1020,470],[1060,450],[1093,465],[1057,490]], 'url(#redTop)', `stroke="${EDGE}" stroke-width="4"`);
  // plateau
  face([[45,552],[420,780],[375,865],[160,760],[45,665]], LF);
  poly([[48,550],[465,350],[790,590],[870,650],[600,690],[360,820],[200,650]], 'url(#redBack)', `stroke="${EDGE}" stroke-width="4"`);
  face([[345,760],[375,810],[600,688],[600,760],[375,870],[345,850]], RF);
  poly([[355,755],[480,740],[598,688],[375,808]], 'url(#red)');
  face([[33,415],[75,440],[75,540],[45,552]], LF);
  face([[75,440],[87,430],[87,530],[75,540]], RF);
  poly([[33,415],[50,405],[87,430],[70,442]], 'url(#redTop)', `stroke="${EDGE}" stroke-width="4"`);
  // thin ribs
  [[390,412,463,378,6],[415,430,487,397,8],[372,470,505,410,42],[398,492,530,430,12],[425,515,555,450,38],[452,535,580,470,40],[480,558,607,490,38],[508,578,637,513,14],[540,600,665,533,42],[572,612,700,555,40],[608,640,735,575,42],[690,640,765,605,22]]
    .forEach(([x, y, X, Y, h]) => { face([[x,y],[X,Y],[X,Y+6],[x+(X-x)*.55,y+(Y-y)*.55+h],[x,y+h]], '#a04e1e'); line([[x,y],[X,Y]], '#b0682a', 4); put(`<circle cx="${X}" cy="${Y}" r="2.600" fill="#ccc"/>`); });
  poly([[578,620],[620,592],[645,600],[600,635]], 'url(#redTop)');
  poly([[610,655],[665,622],[692,635],[640,665]], 'url(#redTop)');
  [[437,438,30],[400,490,40],[491,478,30],[518,500,30],[547,520,32],[512,573,44]].forEach(a => tick(...a));
  // bowl and dome
  put('<path d="M275 675 C275 570 515 570 515 675 C515 730 450 745 430 755 L360 755 C300 735 275 710 275 675Z" fill="url(#bowl)" stroke="#b0692b" stroke-width="4"/>');
  for (let i = 1; i < 11; i++) put(`<ellipse cx="395" cy="${675 + i * 6}" rx="${118 - i * 10}" ry="${76 - i * 6.5}" fill="none" stroke="${i > 6 ? '#bb932d' : '#8a4418'}" stroke-width="1.500" opacity=".6"/>`);
  poly([[355,752],[385,738],[420,738],[435,752],[375,800],[345,760]], 'url(#red)');
  put('<path d="M128 555 C130 480 190 443 243 443 C300 443 358 485 358 555 C358 600 300 632 243 632 C180 632 128 600 128 555Z" fill="url(#dome)"/>');
  for (let i = 1; i < 12; i++) put(`<ellipse cx="243" cy="${472 + i * 8}" rx="${32 + i * 7}" ry="${20 + i * 6.500}" fill="none" stroke="${i < 3 ? '#b58a2c' : '#87421a'}" stroke-width="1.600" opacity=".5"/>`);
  put('<ellipse cx="243" cy="474" rx="38" ry="23" fill="#a87026" stroke="#b98f30" stroke-width="3"/><ellipse cx="243" cy="472" rx="29" ry="18" fill="#a8282a"/><ellipse cx="243" cy="472" rx="19" ry="11" fill="none" stroke="#c08a80" stroke-width="3" stroke-dasharray="4 4"/>');
  put('<path d="M255 483 C275 500 318 560 318 608 V640 C335 665 350 665 360 690 L387 748" fill="none" stroke="#d6d2cf" stroke-width="6"/>');
});

frame(720, 400, () => {
  // hollow cube
  face([[18,80],[170,195],[170,370],[145,370],[22,262]], LF);
  face([[170,195],[345,98],[345,200],[330,260],[240,300],[170,370]], RF);
  poly([[18,80],[200,-17],[345,98],[170,195]], '#a3232a', `stroke="${EDGE}" stroke-width="4"`);
  face([[92,87],[192,28],[192,95],[120,125]], '#a9541f');
  face([[192,28],[272,95],[180,147],[120,118],[192,95]], '#9c4d1e');
  put('<path d="M25 78 L60 62 L80 82 L70 100 L50 102Z M95 105 L140 122 L112 145 L90 130Z" fill="#a3602a" stroke="#d5d0c8" stroke-width="4" stroke-dasharray="7 5"/>');
  put('<path d="M42 84 l12 -8 l10 10 l-12 6 Z M104 122 l10 -6 l12 8 l-12 8 Z" fill="#a3232a"/>');
  tick(353, 95, 92);
  // skirt faces
  face([[45,365],[90,455],[160,520],[160,565],[45,475]], LF);
  face([[160,520],[340,425],[340,470],[160,565]], RF);
  face([[337,378],[435,515],[572,635],[572,680],[337,490]], LF);
  face([[572,635],[1390,150],[1430,125],[1432,178],[572,680]], RF);
  put('<g fill="none" stroke="#b87426" stroke-width="3.500">');
  [[598,640],[690,595],[180,530],[280,475],[785,535],[878,480],[955,430],[972,420],[1050,378],[1070,368],[1140,325],[1162,315],[1228,272],[1254,260],[1308,226],[1330,214],[1380,186],[1404,172]]
    .forEach(([x, y]) => put(`<path d="M${x - 6} ${y - 5} l11 -6 l-1 11 l-9 5 M${x + 4} ${y + 2} l-1 9 l-9 5"/><path d="M${x - 4} ${y + 3} l9 -4 M${x - 5} ${y + 14} l8 -4" stroke="#63368f" stroke-width="3"/>`));
  put('</g>');
});
// short spans, far to near
frame(940, 360, () => {
  bridge([213,20],[255,0],[370,75],[325,103], 28, 70);
  bridge([125,65],[170,48],[270,115],[230,148], 28, 75);
  bridge([35,115],[80,95],[175,160],[135,190], 26, 70);
  tick(248,70,32); tick(328,102,24); tick(230,147,24); tick(175,168,18);
});
frame(720, 400, () => {
  bridge([608,50],[650,28],[735,85],[697,115], 26, 75);
  bridge([515,100],[560,80],[640,130],[598,160], 26, 75);
  bridge([425,155],[470,133],[540,180],[497,207], 28, 75);
  bridge([330,205],[375,183],[440,228],[395,250], 28, 75);
  bridge([237,255],[280,235],[338,275],[295,298], 30, 78);
  bridge([143,308],[188,288],[235,322],[180,350], 52, 70, false);
  bridge([45,365],[88,338],[133,372],[85,395], 62, 90, false);
  [[132,370,25],[126,400,34],[234,322,24],[221,360,22],[338,278,22],[315,316,12],[438,230,24],[496,207,25],[640,138,14],[696,117,14]].forEach(a => tick(...a));
  line([[85,420],[130,402]], '#5f2fa8', 3); line([[180,365],[195,373],[235,352]], '#5f2fa8', 3);
});
// long spans, far to near
frame(940, 360, () => {
  bridge([497,35],[540,15],[750,160],[720,190], 66, 60);
  bridge([408,85],[450,65],[672,230],[630,245], 66, 60);
  bridge([322,135],[365,115],[567,262],[525,290], 66, 60);
  bridge([230,185],[275,162],[463,298],[422,325], 68, 62);
  bridge([143,235],[185,215],[355,335],[315,362], 70, 64);
  bridge([50,290],[92,265],[248,378],[208,405], 70, 68);
  [[530,85,34],[592,255,32],[526,285,24],[463,300,26],[356,342,24],[207,405,24],[438,62,22]].forEach(a => tick(...a));
});
frame(720, 400, () => {
  bridge([620,215],[662,195],[802,285],[760,320], 70, 70);
  bridge([527,265],[570,248],[692,335],[650,365], 70, 80);
  bridge([433,322],[475,300],[585,380],[545,405], 70, 90);
  bridge([337,375],[380,355],[475,420],[430,450], 66, 115, false);
  poly([[378,430],[392,440],[395,480],[378,475]], '#a32f22');
  [[655,270,40],[758,325,26],[650,366,26],[585,385,70],[474,425,26],[573,635,10]].forEach(a => tick(...a));
});
document.getElementById('scene').innerHTML = out.join('');
```
